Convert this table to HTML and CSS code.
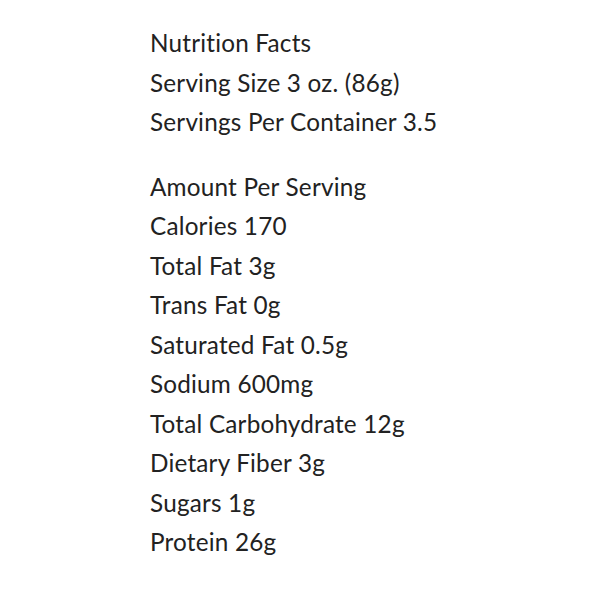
FILE: index.html
```html
<!DOCTYPE html>
<html><head><link rel="stylesheet" href="styles.css"></head>
<body>
<div class="facts">
  <ul class="group">
    <li>Nutrition Facts</li>
    <li>Serving Size 3 oz. (86g)</li>
    <li>Servings Per Container 3.5</li>
  </ul>
  <ul class="group">
    <li>Amount Per Serving</li>
    <li>Calories 170</li>
    <li>Total Fat 3g</li>
    <li>Trans Fat 0g</li>
    <li>Saturated Fat 0.5g</li>
    <li>Sodium 600mg</li>
    <li>Total Carbohydrate 12g</li>
    <li>Dietary Fiber 3g</li>
    <li>Sugars 1g</li>
    <li>Protein 26g</li>
  </ul>
</div>
</body></html>
```
FILE: styles.css
```css
body{margin:0;background:#fff;}
.facts{padding:23px 0 0 150px;font-family:Lato,"Liberation Sans",sans-serif;font-size:24.3px;line-height:39.5px;letter-spacing:0.2px;font-variant-ligatures:none;color:#222;display:flex;flex-direction:column;gap:25px;}
.group{list-style:none;margin:0;padding:0;}
```
